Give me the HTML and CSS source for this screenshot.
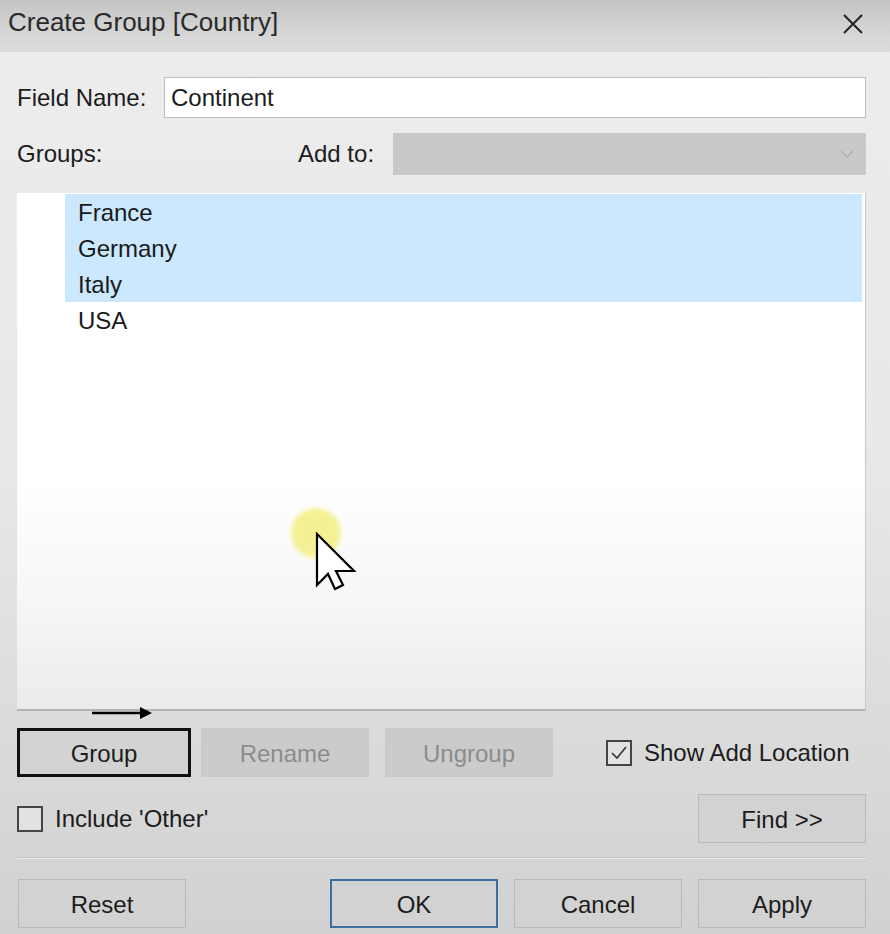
FILE: index.html
```html
<!DOCTYPE html>
<html>
<head>
<meta charset="utf-8">
<link rel="stylesheet" href="styles.css">
</head>
<body>
<div class="dialog">
  <div class="titlebar">
    <span class="title">Create Group [Country]</span>
    <svg class="close" width="22" height="22" viewBox="0 0 22 22"><path d="M2 2 L20 20 M20 2 L2 20" stroke="#222" stroke-width="2" fill="none"/></svg>
  </div>
  <div class="content">
    <div class="row field-row">
      <label class="label field-label">Field Name:</label>
      <div class="input">Continent</div>
    </div>
    <div class="row groups-row">
      <span class="label groups-label">Groups:</span>
      <span class="label addto-label">Add to:</span>
      <div class="select">
        <svg width="14" height="8" viewBox="0 0 14 8"><path d="M1 1 L7 7 L13 1" stroke="#b0b0b0" stroke-width="1.3" fill="none"/></svg>
      </div>
    </div>
    <div class="list">
      <div class="item selected">France</div>
      <div class="item selected">Germany</div>
      <div class="item selected">Italy</div>
      <div class="item">USA</div>
      <div class="pointer">
        <div class="halo"></div>
        <svg class="cursor" width="42" height="60" viewBox="-2 -2 42 60"><path d="M0 0 L0 51 L11 40 L18 55 L26 51 L19 37 L37 37 Z" fill="#fff" stroke="#000" stroke-width="2.2" stroke-linejoin="miter"/></svg>
      </div>
      <svg class="annot-arrow" width="62" height="12" viewBox="0 0 62 12"><path d="M0 6 H50" stroke="#000" stroke-width="2.5"/><path d="M48 0 L60 6 L48 12 Z" fill="#000"/></svg>
    </div>
    <div class="row btn-row">
      <button class="btn btn-group">Group</button>
      <button class="btn disabled btn-rename">Rename</button>
      <button class="btn disabled btn-ungroup">Ungroup</button>
      <label class="check show-loc"><span class="box"><svg width="20" height="18" viewBox="0 0 20 18"><path d="M3 9 L8 14 L17 3" stroke="#333" stroke-width="1.6" fill="none"/></svg></span>Show Add Location</label>
    </div>
    <div class="row other-row">
      <label class="check"><span class="box"></span>Include 'Other'</label>
      <button class="btn btn-find">Find &gt;&gt;</button>
    </div>
    <div class="separator"></div>
    <div class="row bottom-row">
      <button class="btn">Reset</button>
      <div class="spacer"></div>
      <button class="btn btn-ok">OK</button>
      <button class="btn">Cancel</button>
      <button class="btn">Apply</button>
    </div>
  </div>
</div>
</body>
</html>
```

FILE: styles.css
```css
html, body {
  margin: 0;
  padding: 0;
}
body {
  width: 890px;
  height: 934px;
  overflow: hidden;
  font-family: "Liberation Sans", Arial, sans-serif;
  font-size: 24px;
  color: #1c1c1c;
}
.dialog {
  width: 890px;
  height: 934px;
  display: flex;
  flex-direction: column;
  background: linear-gradient(to bottom, #ededed 0%, #e8e8e8 50%, #d8d8d8 85%, #d1d1d1 100%);
}
.titlebar {
  height: 52px;
  flex: none;
  display: flex;
  align-items: center;
  justify-content: space-between;
  padding: 0 26px 8px 8px;
  box-sizing: border-box;
  background: linear-gradient(to bottom, #c4c4c4 0%, #d2d2d2 50%, #dddddd 100%);
}
.title {
  font-size: 26px;
  color: #2a2a2a;
}
.close {
  margin-top: 4px;
}
.content {
  padding: 25px 24px 0 17px;
  display: flex;
  flex-direction: column;
}
.row {
  display: flex;
  align-items: center;
}
.label {
  color: #1c1c1c;
}
.field-label {
  width: 147px;
  flex: none;
}
.input {
  flex: 1;
  height: 41px;
  box-sizing: border-box;
  border: 1px solid #bdbdbd;
  background: #fff;
  padding: 0 6px;
  display: flex;
  align-items: center;
}
.groups-row {
  margin-top: 15px;
  height: 42px;
}
.groups-label {
  width: 281px;
  flex: none;
}
.addto-label {
  width: 95px;
  flex: none;
}
.select {
  flex: 1;
  height: 42px;
  background: #c9c9c9;
  display: flex;
  align-items: center;
  justify-content: flex-end;
  padding-right: 12px;
}
.list {
  position: relative;
  margin-top: 18px;
  height: 518px;
  box-sizing: border-box;
  padding: 1px 3px 0 48px;
  background: linear-gradient(to bottom, #ffffff 0%, #ffffff 55%, #f6f6f6 80%, #ebebeb 100%);
  border-right: 1px solid #c8c8c8;
  border-bottom: 2px solid #b4b4b4;
}
.item {
  height: 36px;
  line-height: 37px;
  padding-left: 13px;
  color: #1a1a1a;
}
.item.selected {
  background: #cce8fe;
}
.pointer {
  position: absolute;
  left: 274px;
  top: 315px;
}
.halo {
  position: absolute;
  left: 0;
  top: 0;
  width: 50px;
  height: 50px;
  border-radius: 50%;
  background: #f4f08a;
  filter: blur(2px);
  opacity: 0.9;
}
.cursor {
  position: absolute;
  left: 24px;
  top: 24px;
}
.annot-arrow {
  position: absolute;
  left: 75px;
  bottom: -10px;
}
.btn {
  font-family: inherit;
  font-size: 24px;
  color: #1c1c1c;
  height: 49px;
  width: 168px;
  box-sizing: border-box;
  border: 1px solid #b9b9b9;
  background: #d2d2d2;
  padding: 2px 0 0 0;
  flex: none;
}
.btn-row {
  margin-top: 17px;
}
.btn-group {
  width: 174px;
  border: 3px solid #111;
  background: #d3d3d3;
}
.disabled {
  color: #8c8c8c;
  background: #cbcbcb;
  border-color: #c8c8c8;
}
.btn-rename {
  margin-left: 10px;
}
.btn-ungroup {
  margin-left: 16px;
}
.check {
  display: flex;
  align-items: center;
  color: #1c1c1c;
}
.box {
  width: 26px;
  height: 26px;
  box-sizing: border-box;
  border: 2px solid #454545;
  background: #e2e2e2;
  margin-right: 12px;
  display: flex;
  align-items: center;
  justify-content: center;
  flex: none;
}
.show-loc {
  margin-left: 53px;
}
.other-row {
  margin-top: 17px;
  justify-content: space-between;
}
.btn-find {
  width: 168px;
}
.separator {
  margin-top: 14px;
  height: 1px;
  background: #c4c4c4;
  border-bottom: 1px solid #ececec;
}
.bottom-row {
  margin-top: 20px;
  padding-left: 1px;
  gap: 16px;
}
.spacer {
  flex: 1;
}
.btn-ok {
  border: 2px solid #3d6e9e;
}
```
